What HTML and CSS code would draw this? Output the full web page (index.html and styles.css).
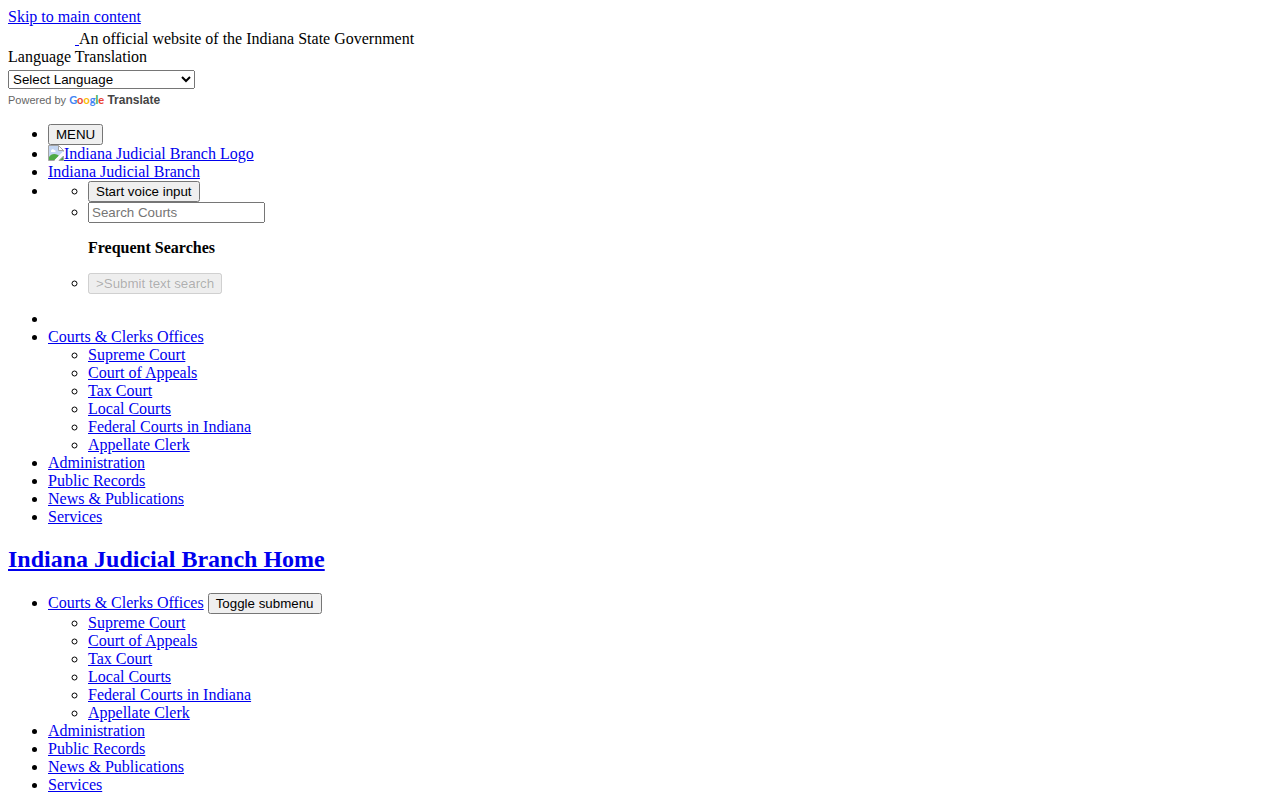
FILE: index.html
```html
<!DOCTYPE html>
<html lang="en">
<head>
    <meta charset="utf-8">
    <title>Indiana Judicial Branch</title>
    <meta name="viewport" content="width=device-width, initial-scale=1">
    <link rel="stylesheet" href="styles.css">
</head>
<body>
    <a href="#main">Skip to main content</a>
    <div class="official">
        <a href="#" aria-label="IN.gov"><span class="stateLogo"></span>&nbsp;</a>An official website of the Indiana State Government
    </div>
    <label for="language">Language Translation</label>
    <div class="translate">
        <select id="language">
            <option>Select Language</option>
        </select>
        <div class="powered">
            Powered by
            <a href="#">
                <span class="google"><span class="blue">G</span><span class="red">o</span><span class="yellow">o</span><span class="blue">g</span><span class="green">l</span><span class="red">e</span></span>
                Translate
            </a>
        </div>
    </div>
    <header>
        <ul>
            <li><button>MENU</button></li>
            <li>
                <a href="#"><svg class="brokenImage" viewBox="0 0 16 16" aria-hidden="true">
                    <path d="M0.5 0.5H10.5L15.5 5.5V8L8 15.5H0.5Z" fill="#c3d5f2" stroke="#a3a3a3"/>
                    <path d="M10.5 0.5V5.5H15.5Z" fill="#fff" stroke="#a3a3a3"/>
                    <path d="M3 6c0-2 3-2 3-1 2 0 2 2 1 2H3z" fill="#fff"/>
                    <path d="M1 15V12C3 9 6 8 10 10L11 11L7 15Z" fill="#4faa46"/>
                    <path d="M15.5 11V15.5H11Z" fill="#4faa46" stroke="#a3a3a3"/>
                    <path d="M16 7L7 16" stroke="#fff" stroke-width="2"/>
                </svg>Indiana Judicial Branch Logo</a>
            </li>
            <li><a href="#">Indiana Judicial Branch</a></li>
            <li>
                <form>
                    <ul>
                        <li><button type="button">Start voice input</button></li>
                        <li>
                            <input type="text" placeholder="Search Courts" aria-label="Search Courts">
                            <h4>Frequent Searches</h4>
                        </li>
                        <li><button disabled>&gt;Submit text search</button></li>
                    </ul>
                </form>
            </li>
            <li></li>
            <li>
                <a href="#">Courts &amp; Clerks Offices</a>
                <ul>
                    <li><a href="#">Supreme Court</a></li>
                    <li><a href="#">Court of Appeals</a></li>
                    <li><a href="#">Tax Court</a></li>
                    <li><a href="#">Local Courts</a></li>
                    <li><a href="#">Federal Courts in Indiana</a></li>
                    <li><a href="#">Appellate Clerk</a></li>
                </ul>
            </li>
            <li><a href="#">Administration</a></li>
            <li><a href="#">Public Records</a></li>
            <li><a href="#">News &amp; Publications</a></li>
            <li><a href="#">Services</a></li>
        </ul>
    </header>
    <nav id="main">
        <h2><a href="#">Indiana Judicial Branch Home</a></h2>
        <ul>
            <li>
                <a href="#">Courts &amp; Clerks Offices</a>
                <button>Toggle submenu</button>
                <ul>
                    <li><a href="#">Supreme Court</a></li>
                    <li><a href="#">Court of Appeals</a></li>
                    <li><a href="#">Tax Court</a></li>
                    <li><a href="#">Local Courts</a></li>
                    <li><a href="#">Federal Courts in Indiana</a></li>
                    <li><a href="#">Appellate Clerk</a></li>
                </ul>
            </li>
            <li><a href="#">Administration</a></li>
            <li><a href="#">Public Records</a></li>
            <li><a href="#">News &amp; Publications</a></li>
            <li><a href="#">Services</a></li>
        </ul>
    </nav>
</body>
</html>
```

FILE: styles.css
```css
body{
    font-family: "Liberation Serif", "Times New Roman", serif;
    font-size: 16px;
    line-height: 18px;
}
a{
    color: #0000ee;
}
button, input, select{
    font-family: "Liberation Sans", Arial, sans-serif;
}
input{
    width: 177px;
    box-sizing: border-box;
}
select{
    width: 187px;
    margin: 4px 0 3px;
}
.official{
    margin-top: 4px;
}
.stateLogo{
    display: inline-block;
    width: 67px;
}
.powered{
    font-family: "Liberation Sans", Arial, sans-serif;
    font-size: 11px;
    line-height: 16px;
    color: #666;
}
.powered a{
    font-size: 12px;
    font-weight: bold;
    color: #444;
    text-decoration: none;
}
.google{
    font-family: Lato, sans-serif;
    font-size: 11px;
}
.blue{
    color: #4285f4;
}
.red{
    color: #ea4335;
}
.yellow{
    color: #fbbc05;
}
.green{
    color: #34a853;
}
.brokenImage{
    width: 16px;
    height: 16px;
    vertical-align: text-top;
}
form{
    margin-bottom: 16px;
}
h4{
    margin: 16px 0;
}
h2{
    font-size: 24px;
    line-height: 27px;
    margin: 20px 0;
}
```
